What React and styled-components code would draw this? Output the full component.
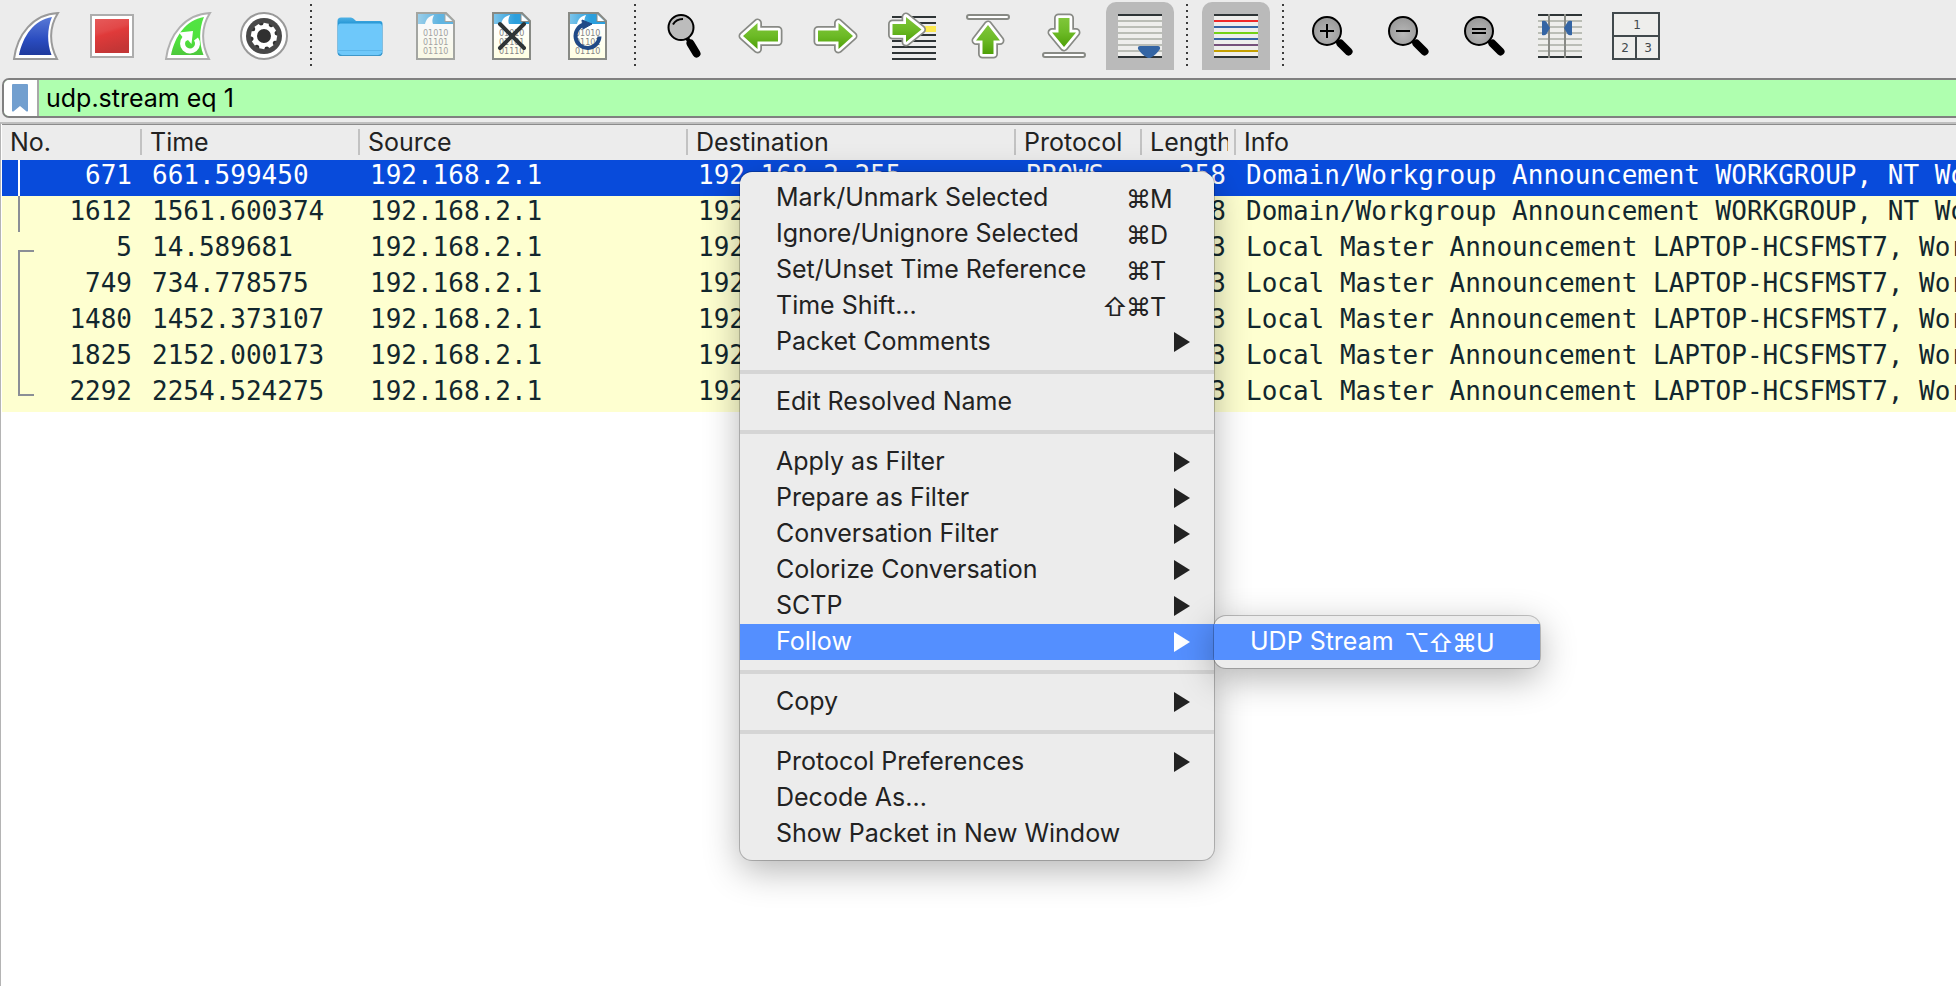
import React from 'react';
import styled, { createGlobalStyle, css } from 'styled-components';

const UI = `Inter, "Liberation Sans", "DejaVu Sans", sans-serif`;
const MONO = `"DejaVu Sans Mono", "Liberation Mono", monospace`;

const GlobalStyle = createGlobalStyle`
  *, *::before, *::after { box-sizing: border-box; }
  html { height: 100%; }
  body {
    margin: 0;
    min-height: 100%;
    background: #ffffff;
    font-family: ${UI};
    color: #222222;
  }
`;

const Window = styled.div`
  display: flex;
  flex-direction: column;
  min-height: 100vh;
  overflow: hidden;
  position: relative;
`;

const Chrome = styled.header`
  background: #ececec;
  padding-bottom: 4px;
`;

const Toolbar = styled.div`
  display: flex;
  align-items: flex-start;
  gap: 8px;
  padding: 2px 2px 8px;
`;

const ToolButton = styled.button`
  display: flex;
  align-items: center;
  justify-content: center;
  flex: none;
  width: 68px;
  height: 68px;
  padding: 0;
  border: 0;
  border-radius: 10px 10px 0 0;
  background: ${(p) => (p.$active ? '#bababa' : 'transparent')};

  svg {
    display: block;
    width: 48px;
    height: 48px;
  }
`;

const Divider = styled.div`
  flex: none;
  width: 12px;
  height: 68px;
  padding: 2px 6px 2px 4px;

  &::before {
    content: '';
    display: block;
    height: 62px;
    background: repeating-linear-gradient(#3c3c3c 0 2px, transparent 2px 6px);
  }
`;

const FilterBar = styled.form`
  display: flex;
  height: 40px;
  margin-left: 2px;
  border: 2px solid #808080;
  border-right: 0;
  border-radius: 7px 0 0 7px;
  background: #afffaf;
  overflow: hidden;
`;

const BookmarkButton = styled.button`
  display: flex;
  align-items: center;
  width: 35px;
  padding: 0 0 0 8px;
  border: 0;
  border-right: 2px solid #a8a8a8;
  background: #ffffff;
`;

const FilterInput = styled.input`
  flex: 1;
  min-width: 0;
  padding: 0 7px;
  border: 0;
  outline: 0;
  background: transparent;
  color: #000000;
  font: 25px/36px ${UI};
`;

const PacketPane = styled.main`
  flex: 1;
  padding-left: 1px;
  border-top: 2px solid #bfbfbf;
  border-left: 1px solid #b4b4b4;
  background: #ffffff;
`;

const PacketTable = styled.table`
  width: 100%;
  table-layout: fixed;
  border-spacing: 0;
  border-top: 1px solid #8c8c8c;
`;

const Col = styled.col`
  width: ${(p) => (p.$w ? `${p.$w}px` : 'auto')};
`;

const HeadCell = styled.th`
  height: 35px;
  padding: 2px 0 3px;
  background: #ececec;
  text-align: left;
  font: 25px/30px ${UI};
`;

const HeadLabel = styled.div`
  display: flex;
  align-items: center;
  height: 30px;
  padding-left: 8px;

  span {
    flex: 1;
    min-width: 0;
    margin-right: 6px;
    overflow: hidden;
    white-space: nowrap;
  }

  &::after {
    content: '';
    width: ${(p) => (p.$last ? '0' : '2px')};
    height: 26px;
    background: #c2c2c2;
  }
`;

const Row = styled.tr`
  background: ${(p) => (p.$selected ? '#084bdb' : '#feffd0')};
  color: ${(p) => (p.$selected ? '#ffffff' : '#12272e')};
`;

const Cell = styled.td`
  height: 36px;
  padding: 0 10px 6px;
  overflow: hidden;
  white-space: nowrap;
  text-align: ${(p) => (p.$right ? 'right' : 'left')};
  font: 26px/30px ${MONO};
`;

const NumberCell = styled(Cell)`
  padding: 0 10px 0 16px;
`;

const NumberLine = styled.div`
  display: flex;
  justify-content: space-between;
  height: 36px;
`;

const Relation = styled.span`
  width: 16px;
  border: 0 solid ${(p) => (p.$selected ? '#ffffff' : '#8b8f96')};
  border-left-width: 2px;
  ${(p) =>
    p.$kind === 'start' &&
    css`
      height: 18px;
      align-self: flex-end;
      border-top-width: 2px;
    `}
  ${(p) =>
    p.$kind === 'end' &&
    css`
      height: 20px;
      border-bottom-width: 2px;
    `}
`;

const MenuPanel = styled.div`
  position: absolute;
  padding: 8px 0;
  border-radius: 12px;
  background: #ececec;
  box-shadow: 0 0 0 1px rgba(0, 0, 0, 0.22), 0 10px 36px rgba(0, 0, 0, 0.3);
`;

const ContextMenu = styled(MenuPanel)`
  top: 172px;
  left: 740px;
  width: 474px;
`;

const Submenu = styled(MenuPanel)`
  top: -8px;
  left: 100%;
  width: 326px;
`;

const ItemWrap = styled.div`
  position: relative;
`;

const MenuItem = styled.button`
  display: flex;
  align-items: flex-start;
  width: 100%;
  height: 36px;
  padding: 0 24px 0 36px;
  border: 0;
  background: ${(p) => (p.$active ? '#548fff' : 'transparent')};
  color: ${(p) => (p.$active ? '#ffffff' : '#222222')};
  font: 25px/34px ${UI};
  text-align: left;
  white-space: nowrap;
`;

const ItemLabel = styled.span`
  flex: 1;
`;

const Shortcut = styled.kbd`
  display: flex;
  justify-content: flex-end;
  font: 25px/38px ${UI};
`;

const Key = styled.span`
  width: ${(p) => (p.$letter ? '40px' : '24px')};
`;

const Arrow = styled.span`
  margin-top: 8px;
  border: 0 solid transparent;
  border-width: 10px 0 10px 16px;
  border-left-color: currentColor;
`;

const Rule = styled.hr`
  height: 4px;
  margin: 10px 0;
  border: 0;
  background: #d5d5d5;
`;

/* ---------- toolbar drawings ---------- */

const Fin = ({ id, from, to, edge, children }) => (
  <svg viewBox="0 0 48 48" aria-hidden="true">
    <defs>
      <linearGradient id={id} x1="0" y1="0" x2="0" y2="1">
        <stop offset="0" stopColor={from[0]} />
        <stop offset="0.6" stopColor={from[1]} />
        <stop offset="1" stopColor={to} />
      </linearGradient>
    </defs>
    <path d="M2 47C5 23 21 2 46 1C37 15 37 32 45 47Z" fill="#fff" stroke={edge} strokeWidth="2" />
    <path d="M7 43C11 24 22 8 40 5C35 17 35 31 39.500 43Z" fill={`url(#${id})`} />
    {children}
  </svg>
);

const StartIcon = () => (
  <Fin id="finBlue" from={['#5a7ad6', '#2a4cc0']} to="#1f3a9c" edge="#9a9a9a" />
);

const RestartIcon = () => (
  <Fin id="finGreen" from={['#52e444', '#4fe23c']} to="#4dc83c" edge="#b0b0b0">
    <path d="M20.500 26.500A7.500 7.500 0 1 0 32 27" fill="none" stroke="#fff" strokeWidth="5" />
    <path d="M15 20.500L29 19L27.500 32L24 28L20 30L18.500 25Z" fill="#fff" />
  </Fin>
);

const StopIcon = () => (
  <svg viewBox="0 0 48 48" aria-hidden="true">
    <defs>
      <linearGradient id="stopRed" x1="0" y1="0" x2="0.3" y2="1">
        <stop offset="0" stopColor="#e65a5a" />
        <stop offset="0.4" stopColor="#e24848" />
        <stop offset="0.5" stopColor="#e03a3a" />
        <stop offset="1" stopColor="#c43636" />
      </linearGradient>
    </defs>
    <rect x="3" y="3" width="42" height="42" fill="#fff" stroke="#adadad" strokeWidth="2" />
    <rect x="7" y="7" width="34" height="34" fill="url(#stopRed)" />
  </svg>
);

const teeth = [0, 45, 90, 135, 180, 225, 270, 315];
const GearIcon = () => (
  <svg viewBox="0 0 48 48" aria-hidden="true">
    <circle cx="24" cy="24" r="23" fill="#fff" stroke="#999" strokeWidth="2" />
    <circle cx="24" cy="24" r="18" fill="#484848" />
    <circle cx="24" cy="24" r="13" fill="#303030" />
    <circle cx="24" cy="24" r="9" fill="none" stroke="#fff" strokeWidth="4" />
    {teeth.map((a) => (
      <path key={a} d="M21.500 11h5l1 4h-7z" fill="#fff" transform={`rotate(${a + 10} 24 24)`} />
    ))}
  </svg>
);

const FolderIcon = () => (
  <svg viewBox="0 0 48 48" aria-hidden="true">
    <defs>
      <linearGradient id="folderBack" x1="0" y1="0" x2="0" y2="1">
        <stop offset="0" stopColor="#4fb2e6" />
        <stop offset="0.2" stopColor="#1c8fd0" />
      </linearGradient>
    </defs>
    <path d="M1.500 9Q1.500 5.500 5 5.500H15Q17 5.500 19 8L20 9H44Q46.500 9 46.500 12V40Q46.500 44 43 44H5Q1.500 44 1.500 40Z" fill="url(#folderBack)" />
    <path d="M2 14Q2 11.500 4 11.500H44Q46 11.500 46 14V39.500Q46 43 43 43H5Q2 43 2 39.500Z" fill="#6ec8fa" />
    <path d="M2 38.500H46" stroke="#5bb6ea" strokeWidth="1" />
    <path d="M2.500 41Q3 43.500 6 43.500H42Q45.500 43.500 46 41" fill="none" stroke="#3f97c8" strokeWidth="1" />
  </svg>
);

const CaptureFile = ({ id, faded, children }) => (
  <svg viewBox="0 0 48 48" aria-hidden="true">
    <defs>
      <linearGradient id={id} x1="0" y1="0" x2="0" y2="1">
        <stop offset="0.3" stopColor="#fff" />
        <stop offset="1" stopColor="#ffffe2" />
      </linearGradient>
      <linearGradient id={`${id}Band`} x1="0" y1="0" x2="1" y2="0">
        <stop offset="0" stopColor="#7cc4ea" />
        <stop offset="0.6" stopColor="#2b9fdd" />
        <stop offset="1" stopColor="#2b9fdd" />
      </linearGradient>
    </defs>
    <g opacity={faded ? 0.72 : 1}>
      <path d="M5 1H34L42 9V47H5Z" fill={`url(#${id})`} />
      <path d="M6 2H34L41 9V12H6Z" fill={`url(#${id}Band)`} />
      <path d="M13 12C14 7 17 4 22 3C20 7 20 10 21 12Z" fill="#fff" />
      <path d="M33 2V9.500H41" fill="#fff" stroke="#888a85" strokeWidth="1" />
      <path d="M5 1H34L42 9V47H5Z" fill="none" stroke="#888a85" strokeWidth="2" />
      <g fill="#858585" fontFamily="DejaVu Sans, sans-serif" fontSize="8">
        <text x="11" y="24">01010</text>
        <text x="11" y="33">01101</text>
        <text x="11" y="42">01110</text>
      </g>
    </g>
    {children}
  </svg>
);

const SaveIcon = () => <CaptureFile id="docSave" faded />;

const CloseIcon = () => (
  <CaptureFile id="docClose">
    <path d="M12 12L36 36M36 12L12 36" stroke="#2e3436" strokeWidth="4" strokeLinecap="round" />
  </CaptureFile>
);

const ReloadIcon = () => (
  <CaptureFile id="docReload">
    <path d="M20 12.500A12 12 0 1 0 35.500 24.500" fill="none" stroke="#204a87" strokeWidth="4" />
    <path d="M18 8L28 12L19 17Z" fill="#204a87" stroke="#204a87" />
  </CaptureFile>
);

const FindIcon = () => (
  <svg viewBox="0 0 48 48" aria-hidden="true">
    <path d="M26.500 25L30 31" stroke="#000" strokeWidth="4" />
    <path d="M30.500 31.500L36.500 41.500" stroke="#000" strokeWidth="8" strokeLinecap="round" />
    <circle cx="21" cy="15.500" r="12.500" fill="#bcbcbc" stroke="#000" strokeWidth="2" />
    <path d="M13 12.500Q16 7 23 7" fill="none" stroke="#000" strokeWidth="2" />
  </svg>
);

const arrowShape = {
  left: 'M7 24L21.500 11V18.500H42V29.500H21.500V37Z',
  right: 'M41 24L26.500 11V18.500H6V29.500H26.500V37Z',
  goto: 'M33.500 17.500L18 5V12H4.500V23H18V30Z',
  up: 'M24 13L12 28.500H18.500V42H29.500V28.500H36Z',
  down: 'M24 35L12 20.500H18.500V6H29.500V20.500H36Z',
};

const GreenArrow = ({ dir }) => (
  <g>
    <defs>
      <linearGradient id={`green-${dir}`} x1="0" y1="0" x2="0" y2="1">
        <stop offset="0" stopColor="#80c63a" />
        <stop offset="0.5" stopColor="#6cba26" />
        <stop offset="1" stopColor="#4fa008" />
      </linearGradient>
    </defs>
    <path d={arrowShape[dir]} fill="#888a85" stroke="#888a85" strokeWidth="9" strokeLinejoin="round" />
    <path d={arrowShape[dir]} fill="#fff" stroke="#fff" strokeWidth="5.500" strokeLinejoin="round" />
    <path d={arrowShape[dir]} fill={`url(#green-${dir})`} />
  </g>
);

const ArrowIcon = ({ dir }) => (
  <svg viewBox="0 0 48 48" aria-hidden="true">
    {dir === 'goto' && (
      <g>
        {[4, 10, 22, 28, 34, 40, 46].map((y) => (
          <rect key={y} x="4" y={y} width="44" height="2" fill="#2e3436" />
        ))}
        <rect x="30" y="14" width="18" height="6" fill="#fce94f" />
      </g>
    )}
    {dir === 'up' && <rect x="3" y="3" width="42" height="4" rx="2" fill="#fff" stroke="#888a85" strokeWidth="2" />}
    <GreenArrow dir={dir} />
    {dir === 'down' && <rect x="3" y="41" width="42" height="4" rx="2" fill="#fff" stroke="#888a85" strokeWidth="2" />}
  </svg>
);

const grays = Array(6).fill('#babdb6');
const Lines = ({ colors, fill }) => (
  <g>
    <rect x="2" y="2" width="44" height="44" fill={fill} />
    {['#2e3436', ...colors, '#2e3436'].map((c, i) => (
      <rect key={i} x="2" y={2 + i * 6} width="44" height="2" fill={c} />
    ))}
  </g>
);

const AutoScrollIcon = () => (
  <svg viewBox="0 0 48 48" aria-hidden="true">
    <Lines colors={grays} fill="#eeeeec" />
    <path d="M24 34H42Q44.500 34 44 37Q40 43 35 45.500Q33 46.500 31 45.500Q26 43 22 37Q21.500 34 24 34Z" fill="#3465a4" />
  </svg>
);

const ColorizeIcon = () => (
  <svg viewBox="0 0 48 48" aria-hidden="true">
    <Lines colors={['#ef2929', '#3465a4', '#73d216', '#3465a4', '#75507b', '#c4a000']} fill="#eeeeec" />
  </svg>
);

const ResizeIcon = () => (
  <svg viewBox="0 0 48 48" aria-hidden="true">
    <Lines colors={grays} fill="#eeeeec" />
    <rect x="12" y="2" width="2" height="44" fill="#888a85" />
    <rect x="28" y="2" width="2" height="44" fill="#888a85" />
    <path d="M6 9Q9 8 10.500 10L14 16L10.500 22Q9 24 6 23Z" fill="#3465a4" />
    <path d="M36 9Q33 8 31.500 10L28 16L31.500 22Q33 24 36 23Z" fill="#3465a4" />
  </svg>
);

const zoomMarks = {
  in: 'M12 19H26M19 12V26',
  out: 'M12 19H26',
  reset: 'M12 17H26M12 21H26',
};

const ZoomIcon = ({ kind }) => (
  <svg viewBox="0 0 48 48" aria-hidden="true">
    <defs>
      <radialGradient id={`lens-${kind}`} cx="0.5" cy="0.6" r="0.6">
        <stop offset="0" stopColor="#b8b8b8" />
        <stop offset="1" stopColor="#989898" />
      </radialGradient>
    </defs>
    <path d="M28 28L32 32" stroke="#000" strokeWidth="4" />
    <path d="M32.500 31.500L40.500 39.500" stroke="#000" strokeWidth="8" strokeLinecap="round" />
    <circle cx="19" cy="19" r="14" fill={`url(#lens-${kind})`} stroke="#000" strokeWidth="2" />
    <path d={zoomMarks[kind]} stroke="#000" strokeWidth="2" />
  </svg>
);

const LayoutIcon = () => (
  <svg viewBox="0 0 48 48" aria-hidden="true">
    <rect x="1" y="1" width="46" height="46" fill="#eeeeec" stroke="#41494c" strokeWidth="2" />
    <path d="M1 24H47M24 24V47" stroke="#41494c" strokeWidth="2" />
    <g fill="#41494c" fontFamily="DejaVu Sans, sans-serif" fontSize="12" textAnchor="middle">
      <text x="25" y="17">1</text>
      <text x="13" y="40">2</text>
      <text x="36" y="40">3</text>
    </g>
  </svg>
);

const BookmarkIcon = () => (
  <svg width="16" height="28" viewBox="0 0 16 28" aria-hidden="true">
    <path d="M0 1Q0 0 1 0H15Q16 0 16 1V27Q15 28 14 27L8 22L2 27Q1 28 0 27Z" fill="#729fcf" />
  </svg>
);

/* ---------- content ---------- */

const tools = [
  { label: 'Start capturing packets', icon: <StartIcon /> },
  { label: 'Stop capturing packets', icon: <StopIcon /> },
  { label: 'Restart current capture', icon: <RestartIcon /> },
  { label: 'Capture options', icon: <GearIcon /> },
  null,
  { label: 'Open a capture file', icon: <FolderIcon /> },
  { label: 'Save this capture file', icon: <SaveIcon /> },
  { label: 'Close this capture file', icon: <CloseIcon /> },
  { label: 'Reload this file', icon: <ReloadIcon /> },
  null,
  { label: 'Find a packet', icon: <FindIcon /> },
  { label: 'Go back', icon: <ArrowIcon dir="left" /> },
  { label: 'Go forward', icon: <ArrowIcon dir="right" /> },
  { label: 'Go to packet', icon: <ArrowIcon dir="goto" /> },
  { label: 'Go to the first packet', icon: <ArrowIcon dir="up" /> },
  { label: 'Go to the last packet', icon: <ArrowIcon dir="down" /> },
  { label: 'Auto scroll', icon: <AutoScrollIcon />, active: true },
  null,
  { label: 'Colorize packet list', icon: <ColorizeIcon />, active: true },
  null,
  { label: 'Zoom in', icon: <ZoomIcon kind="in" /> },
  { label: 'Zoom out', icon: <ZoomIcon kind="out" /> },
  { label: 'Normal size', icon: <ZoomIcon kind="reset" /> },
  { label: 'Resize columns', icon: <ResizeIcon /> },
  { label: 'Reset layout', icon: <LayoutIcon /> },
];

const columns = [
  { name: 'No.', width: 140 },
  { name: 'Time', width: 218 },
  { name: 'Source', width: 328 },
  { name: 'Destination', width: 328 },
  { name: 'Protocol', width: 126 },
  { name: 'Length', width: 94 },
  { name: 'Info' },
];

const DOMAIN = 'Domain/Workgroup Announcement WORKGROUP, NT Workstation, Domain Enum';
const LOCAL = 'Local Master Announcement LAPTOP-HCSFMST7, Workstation, Server';

const packets = [
  { no: 671, time: '661.599450', length: 258, info: DOMAIN, kind: 'line', selected: true },
  { no: 1612, time: '1561.600374', length: 258, info: DOMAIN, kind: 'line' },
  { no: 5, time: '14.589681', length: 243, info: LOCAL, kind: 'start' },
  { no: 749, time: '734.778575', length: 243, info: LOCAL, kind: 'line' },
  { no: 1480, time: '1452.373107', length: 243, info: LOCAL, kind: 'line' },
  { no: 1825, time: '2152.000173', length: 243, info: LOCAL, kind: 'line' },
  { no: 2292, time: '2254.524275', length: 243, info: LOCAL, kind: 'end' },
];

const menu = [
  { label: 'Mark/Unmark Selected', keys: '⌘M' },
  { label: 'Ignore/Unignore Selected', keys: '⌘D' },
  { label: 'Set/Unset Time Reference', keys: '⌘T' },
  { label: 'Time Shift...', keys: '⇧⌘T' },
  { label: 'Packet Comments', more: true },
  null,
  { label: 'Edit Resolved Name' },
  null,
  { label: 'Apply as Filter', more: true },
  { label: 'Prepare as Filter', more: true },
  { label: 'Conversation Filter', more: true },
  { label: 'Colorize Conversation', more: true },
  { label: 'SCTP', more: true },
  { label: 'Follow', more: true, submenu: [{ label: 'UDP Stream', keys: '⌥⇧⌘U' }] },
  null,
  { label: 'Copy', more: true },
  null,
  { label: 'Protocol Preferences', more: true },
  { label: 'Decode As...' },
  { label: 'Show Packet in New Window' },
];

const Keys = ({ value }) => (
  <Shortcut>
    {[...value].map((k, i) => (
      <Key key={i} $letter={/[A-Z]/.test(k)}>
        {k}
      </Key>
    ))}
  </Shortcut>
);

const MenuEntry = ({ item }) => (
  <ItemWrap>
    <MenuItem type="button" role="menuitem" $active={Boolean(item.submenu)}>
      <ItemLabel>{item.label}</ItemLabel>
      {item.keys && <Keys value={item.keys} />}
      {item.more && <Arrow />}
    </MenuItem>
    {item.submenu && (
      <Submenu role="menu">
        {item.submenu.map((sub) => (
          <MenuItem key={sub.label} type="button" role="menuitem" $active>
            <ItemLabel>{sub.label}</ItemLabel>
            <Keys value={sub.keys} />
          </MenuItem>
        ))}
      </Submenu>
    )}
  </ItemWrap>
);

export default function App() {
  return (
    <Window>
      <GlobalStyle />
      <Chrome>
        <Toolbar role="toolbar">
          {tools.map((tool, i) =>
            tool ? (
              <ToolButton key={i} type="button" aria-label={tool.label} $active={tool.active}>
                {tool.icon}
              </ToolButton>
            ) : (
              <Divider key={i} />
            )
          )}
        </Toolbar>
        <FilterBar onSubmit={(e) => e.preventDefault()}>
          <BookmarkButton type="button" aria-label="Manage saved filters">
            <BookmarkIcon />
          </BookmarkButton>
          <FilterInput aria-label="Display filter" defaultValue="udp.stream eq 1" spellCheck={false} />
        </FilterBar>
      </Chrome>

      <PacketPane>
        <PacketTable>
          <colgroup>
            {columns.map((c) => (
              <Col key={c.name} $w={c.width} />
            ))}
          </colgroup>
          <thead>
            <tr>
              {columns.map((c) => (
                <HeadCell key={c.name} scope="col">
                  <HeadLabel $last={!c.width}>
                    <span>{c.name}</span>
                  </HeadLabel>
                </HeadCell>
              ))}
            </tr>
          </thead>
          <tbody>
            {packets.map((p) => (
              <Row key={p.no} $selected={p.selected}>
                <NumberCell>
                  <NumberLine>
                    <Relation $kind={p.kind} $selected={p.selected} />
                    <span>{p.no}</span>
                  </NumberLine>
                </NumberCell>
                <Cell>{p.time}</Cell>
                <Cell>192.168.2.1</Cell>
                <Cell>192.168.2.255</Cell>
                <Cell>BROWS…</Cell>
                <Cell $right>{p.length}</Cell>
                <Cell>{p.info}</Cell>
              </Row>
            ))}
          </tbody>
        </PacketTable>
      </PacketPane>

      <ContextMenu role="menu">
        {menu.map((item, i) => (item ? <MenuEntry key={i} item={item} /> : <Rule key={i} />))}
      </ContextMenu>
    </Window>
  );
}
